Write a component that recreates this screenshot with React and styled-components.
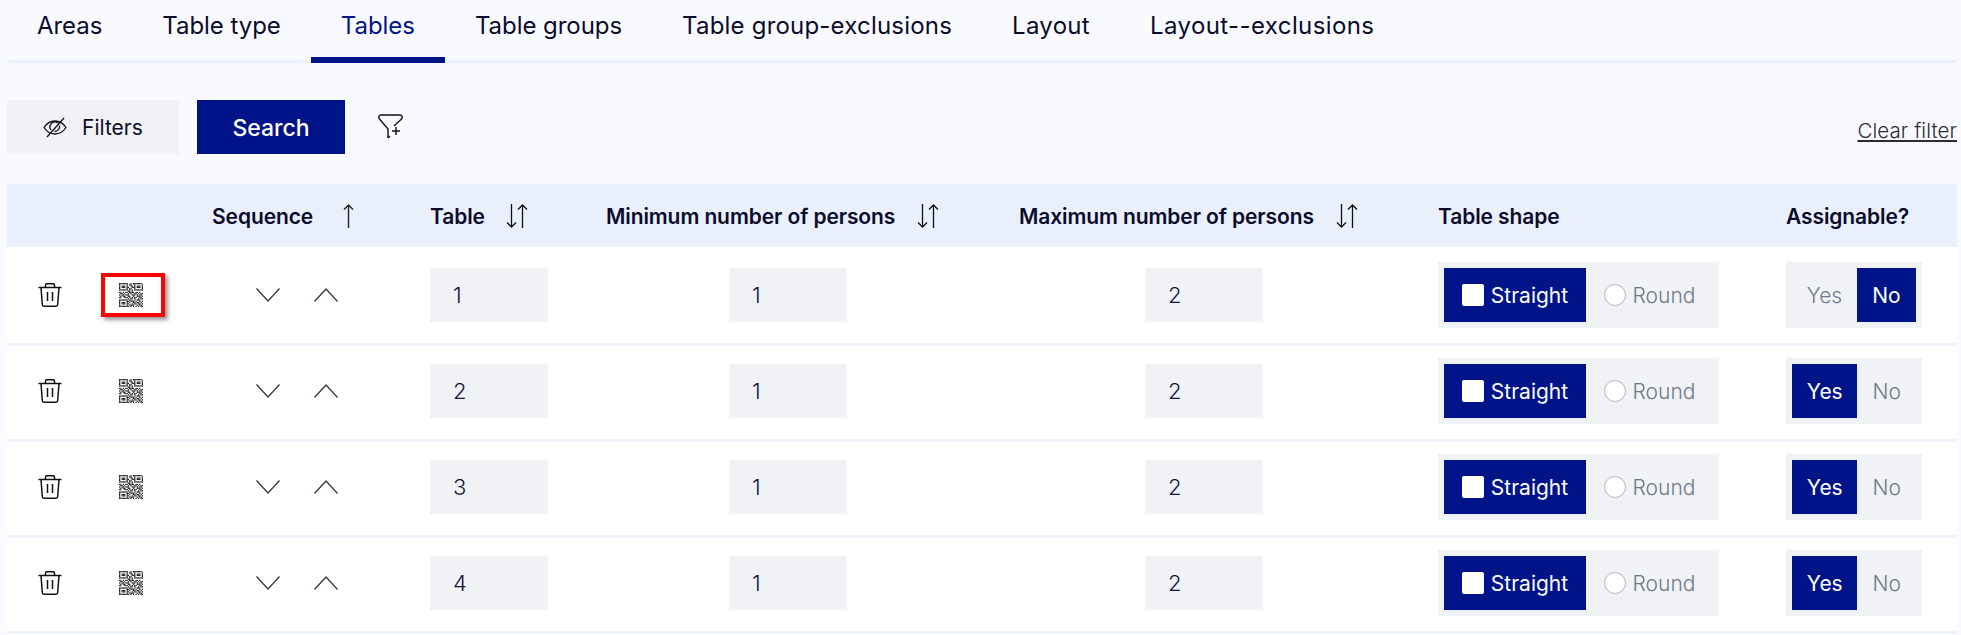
import React from "react";
import styled, { createGlobalStyle } from "styled-components";

const GlobalStyle = createGlobalStyle`
    html, body {
        margin: 0;
        padding: 0;
        background: #f9faff;
        overflow: hidden;
    }
    * {
        box-sizing: border-box;
    }
`;

const Page = styled.div`
    width: 1961px;
    height: 635px;
    padding-left: 7px;
    padding-right: 4px;
    font-family: "Inter", "Liberation Sans", sans-serif;
    color: #0b0b2b;
    overflow: hidden;
`;
const Tabs = styled.div`
    display: flex;
    height: 63px;
    border-bottom: 3px solid #e9effb;
`;
const Tab = styled.div`
    height: 63px;
    padding: 6px 30px 0;
    font-size: 24px;
    line-height: 40px;
    letter-spacing: ${(p) => p.$spacing}px;
    color: ${(p) => (p.$active ? "#001489" : "#0b0b2b")};
    border-bottom: ${(p) => (p.$active ? "6px solid #001489" : "none")};
`;
const Toolbar = styled.div`
    display: flex;
    align-items: center;
    height: 54px;
    margin-top: 37px;
    margin-bottom: 30px;
`;
const FilterButton = styled.div`
    display: flex;
    align-items: center;
    gap: 15px;
    width: 172px;
    height: 54px;
    padding-left: 36px;
    background: #f1f2f6;
    font-size: 21px;
`;
const SearchButton = styled.div`
    display: flex;
    align-items: center;
    justify-content: center;
    width: 148px;
    height: 54px;
    margin-left: 18px;
    padding-top: 1px;
    background: #001489;
    color: #fff;
    font-size: 23px;
    font-weight: 500;
`;
const FunnelWrap = styled.div`
    display: flex;
    margin-left: 33px;
`;
const ClearFilter = styled.a`
    margin-left: auto;
    margin-top: 6px;
    font-size: 20.5px;
    font-weight: 300;
    letter-spacing: 0.1px;
    color: #2b2b35;
    text-decoration: underline;
`;
const Row = styled.div`
    display: grid;
    grid-template-columns: 94px 111px 218px 176px 413px 419px 348px 171px;
    align-items: center;
`;
const HeadRow = styled(Row)`
    height: 63px;
    background: #e9effb;
`;
const BodyRow = styled(Row)`
    height: 96px;
    background: #fff;
    & + & {
        box-shadow: inset 0 3px 0 #eef2fb;
    }
`;
const HeadCell = styled.div`
    display: flex;
    align-items: center;
    padding-top: 1px;
    font-size: 21px;
    font-weight: 600;
    letter-spacing: -0.1px;
    white-space: nowrap;
`;
const SortIcon = styled.span`
    display: flex;
    margin-left: ${(p) => p.$gap}px;
`;
const TrashCell = styled.div`
    display: flex;
    padding-left: 31px;
`;
const QrButton = styled.div`
    display: flex;
    align-items: center;
    justify-content: center;
    width: 64px;
    height: 44px;
    padding-right: 4px;
    border: ${(p) => (p.$marked ? "4px solid #f00" : "none")};
    box-shadow: ${(p) => (p.$marked ? "3px 3px 4px rgba(0,0,0,.4)" : "none")};
`;
const SeqCell = styled.div`
    display: flex;
    gap: 34px;
    padding-left: 44px;
`;
const NumberInput = styled.div`
    width: 118px;
    height: 54px;
    margin-left: ${(p) => p.$offset || 0}px;
    padding-left: 23px;
    background: #f1f2f6;
    font-size: 22px;
    font-weight: 300;
    line-height: 54px;
    color: #14143c;
`;
const Segments = styled.div`
    display: flex;
    width: ${(p) => p.$width}px;
    height: 66px;
    padding: 6px;
    background: #f1f2f6;
`;
const Segment = styled.div`
    display: flex;
    align-items: center;
    justify-content: center;
    gap: 7px;
    width: ${(p) => p.$width}px;
    height: 54px;
    font-size: 21px;
    font-weight: ${(p) => (p.$on ? 400 : 300)};
    color: ${(p) => (p.$on ? "#fff" : "#6f7a8a")};
    background: ${(p) => (p.$on ? "#001489" : "transparent")};
`;
const CheckBox = styled.span`
    width: 22px;
    height: 22px;
    background: #fff;
    border-radius: 2px;
`;
const RadioDot = styled.span`
    width: 22px;
    height: 22px;
    background: #fff;
    border: 1px solid #b4b7bd;
    border-radius: 50%;
`;

const EyeOff = () => (
    <svg width="24" height="24" viewBox="0 0 24 24" fill="none" stroke="#111" strokeWidth="1.3">
        <path d="M1 12.5C4 8 8 6 12 6s8 2 11 6.500c-3 4.500-7 6.500-11 6.500s-8-2-11-6.500z" />
        <path d="M8 15a5 5 0 0 1 7-7M16.500 10.500a5 5 0 0 1-5 6" />
        <path d="M4 22L21 3" />
    </svg>
);
const FunnelPlus = () => (
    <svg width="26" height="26" viewBox="0 0 26 26" fill="none" stroke="#111" strokeWidth="1.4">
        <path d="M10 24V15L1.500 5C0 3 1 1 3 1H22C24 1 25 3 23.500 5L16 12" />
        <path d="M10 24l2-2" />
        <path d="M18 13v8M14 17h8" />
    </svg>
);
const Trash = () => (
    <svg width="24" height="24" viewBox="0 0 24 24" fill="none" stroke="#111" strokeWidth="1.5">
        <path d="M0.500 4.500h23" />
        <path d="M7.500 4.500V2c0-.8.5-1.200 1.200-1.200h6.600c.7 0 1.200.4 1.200 1.200v2.500" />
        <path d="M3 4.500l1.300 17c.1 1 .7 1.700 1.700 1.700h12c1 0 1.600-.7 1.700-1.700l1.300-17" />
        <path d="M9.500 9v9M14.500 9v9" />
    </svg>
);

const QR_ROWS = [
    "1111111001011111110",
    "1000001011001000001",
    "1011101001101011101",
    "1011101100111011101",
    "1000001011001000001",
    "1111111010101111111",
    "0000000110100000000",
    "1101011011110110100",
    "0110100101001101011",
    "1011011100111010110",
    "0101100110010011101",
    "1100111010101100110",
    "0000000101101001011",
    "1111111011001011100",
    "1000001101110100101",
    "1011101010011011010",
    "1011101100101101101",
    "1000001011110010110",
    "1111111101010101011",
];
const QrCode = () => (
    <svg width="24" height="24" viewBox="0 0 19 19">
        {QR_ROWS.map((line, y) =>
            line.split("").map((c, x) => (c === "1" ? <rect key={x + "-" + y} x={x} y={y} width="1" height="1" fill="#222" /> : null))
        )}
    </svg>
);

const ChevronDown = () => (
    <svg width="24" height="14" viewBox="0 0 24 14" fill="none" stroke="#333a45" strokeWidth="1.3">
        <path d="M0.500 0.500L12 13 23.500 0.500" />
    </svg>
);
const ChevronUp = () => (
    <svg width="24" height="14" viewBox="0 0 24 14" fill="none" stroke="#333a45" strokeWidth="1.3">
        <path d="M0.500 13.500L12 1 23.500 13.500" />
    </svg>
);
const ArrowUp = () => (
    <svg width="11" height="24" viewBox="0 0 11 24" fill="none" stroke="#222" strokeWidth="1.4">
        <path d="M5.500 24V1M1 5.500L5.500 1l4.500 4.500" />
    </svg>
);
const SortArrows = () => (
    <svg width="22" height="24" viewBox="0 0 22 24" fill="none" stroke="#111" strokeWidth="1.3">
        <path d="M5.500 0v23M1 18.500L5.500 23l4.500-4.500" />
        <path d="M16.500 24V1M12 5.500L16.500 1l4.500 4.500" />
    </svg>
);

const tabs = [
    { label: "Areas", spacing: -0.05 },
    { label: "Table type", spacing: -0.05 },
    { label: "Tables", spacing: -0.05 },
    { label: "Table groups", spacing: -0.05 },
    { label: "Table group-exclusions", spacing: 0.2 },
    { label: "Layout", spacing: 0.3 },
    { label: "Layout--exclusions", spacing: 0.4 },
];
const rows = [
    { table: 1, assignable: false },
    { table: 2, assignable: true },
    { table: 3, assignable: true },
    { table: 4, assignable: true },
];

const App = () => {
    return (
        <Page>
            <GlobalStyle />
            <Tabs>
                {tabs.map((t) => (
                    <Tab key={t.label} $spacing={t.spacing} $active={t.label === "Tables"}>{t.label}</Tab>
                ))}
            </Tabs>
            <Toolbar>
                <FilterButton><EyeOff />Filters</FilterButton>
                <SearchButton>Search</SearchButton>
                <FunnelWrap><FunnelPlus /></FunnelWrap>
                <ClearFilter>Clear filter</ClearFilter>
            </Toolbar>
            <HeadRow>
                <div />
                <div />
                <HeadCell>Sequence<SortIcon $gap={30}><ArrowUp /></SortIcon></HeadCell>
                <HeadCell>Table<SortIcon $gap={21}><SortArrows /></SortIcon></HeadCell>
                <HeadCell>Minimum number of persons<SortIcon $gap={22}><SortArrows /></SortIcon></HeadCell>
                <HeadCell>Maximum number of persons<SortIcon $gap={22}><SortArrows /></SortIcon></HeadCell>
                <HeadCell>Table shape</HeadCell>
                <HeadCell>Assignable?</HeadCell>
            </HeadRow>
            {rows.map((r) => (
                <BodyRow key={r.table}>
                    <TrashCell><Trash /></TrashCell>
                    <QrButton $marked={r.table === 1}><QrCode /></QrButton>
                    <SeqCell><ChevronDown /><ChevronUp /></SeqCell>
                    <NumberInput>{r.table}</NumberInput>
                    <NumberInput $offset={123}>1</NumberInput>
                    <NumberInput $offset={126}>2</NumberInput>
                    <Segments $width={281}>
                        <Segment $on $width={142}><CheckBox />Straight</Segment>
                        <Segment $width={127}><RadioDot />Round</Segment>
                    </Segments>
                    <Segments $width={136}>
                        <Segment $on={r.assignable} $width={r.assignable ? 66 : 65}>Yes</Segment>
                        <Segment $on={!r.assignable} $width={59}>No</Segment>
                    </Segments>
                </BodyRow>
            ))}
            <BodyRow />
        </Page>
    );
};

export default App;
